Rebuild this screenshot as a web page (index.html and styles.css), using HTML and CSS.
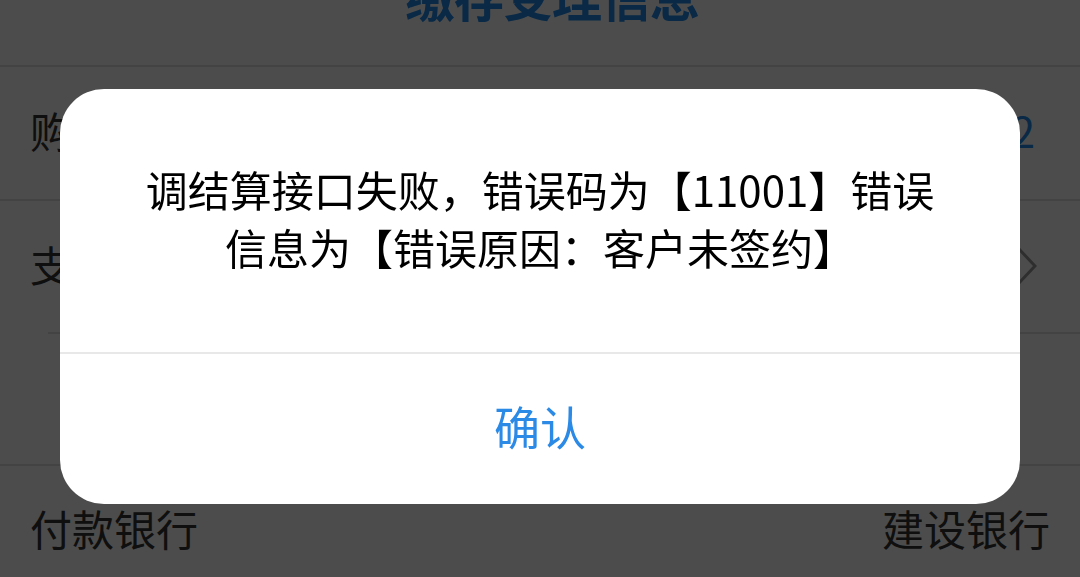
FILE: index.html
```html
<!DOCTYPE html>
<html lang="zh-CN">
<head>
<meta charset="utf-8">
<title>缴存受理信息</title>
<link rel="stylesheet" href="styles.css">
</head>
<body>
<div class="page">
  <header class="header">
    <h1 class="title">缴存受理信息</h1>
  </header>
  <div class="divider"></div>
  <div class="row row-1">
    <span class="label">购房合同号</span>
    <span class="value">2</span>
  </div>
  <div class="divider"></div>
  <div class="row row-2">
    <span class="label">支付方式</span>
    <svg class="chevron" width="20" height="38" viewBox="0 0 20 38" aria-hidden="true">
      <polyline points="2,2 18,19 2,36" fill="none" stroke="#9c9c9c" stroke-width="3"/>
    </svg>
  </div>
  <div class="divider inset"></div>
  <div class="row row-3"></div>
  <div class="divider"></div>
  <div class="row row-4">
    <span class="label">付款银行</span>
    <span class="value plain">建设银行</span>
  </div>
</div>

<div class="overlay">
  <div class="dialog">
    <p class="message">调结算接口失败，错误码为【11001】错误信息为【错误原因：客户未签约】</p>
    <div class="dialog-divider"></div>
    <button class="confirm" type="button">确认</button>
  </div>
</div>
</body>
</html>
```

FILE: styles.css
```css
* { box-sizing: border-box; }

html, body {
  margin: 0;
  padding: 0;
  height: 100%;
  overflow: hidden;
  background: #ffffff;
  font-family: "Noto Sans CJK SC", "Noto Sans", sans-serif;
}

.page {
  width: 1080px;
  background: #ffffff;
}

.header {
  height: 65px;
  display: flex;
  justify-content: center;
  align-items: flex-start;
  overflow: hidden;
}

.title {
  margin: -30px 0 0 24px;
  font-size: 50px;
  line-height: 50px;
  font-weight: 700;
  color: #1f8bea;
  letter-spacing: -1px;
}

.divider {
  height: 2px;
  background: #e0e0e0;
}

.divider.inset {
  margin-left: 48px;
}

.row {
  display: flex;
  align-items: center;
  justify-content: space-between;
  padding: 0 30px 7px;
  font-size: 42px;
  color: #333333;
}

.row-1 { height: 132px; }
.row-2 { height: 131px; }
.row-3 { height: 130px; }
.row-4 { height: 132px; padding-bottom: 10px; }

.row-1 .value {
  color: #1f8bea;
  margin-right: 15px;
}

.row .value.plain {
  color: #333333;
}

.chevron {
  display: block;
  margin-right: 13px;
  margin-top: 6px;
}

.overlay {
  position: fixed;
  inset: 0;
  background: rgba(0, 0, 0, 0.7);
  display: flex;
  justify-content: center;
  align-items: flex-start;
  padding-top: 89px;
}

.dialog {
  width: 960px;
  background: #ffffff;
  border-radius: 44px;
  overflow: hidden;
  display: flex;
  flex-direction: column;
}

.message {
  margin: 0;
  padding: 71px 72px 76px;
  font-size: 42px;
  line-height: 58px;
  color: #000000;
  text-align: center;
}

.dialog-divider {
  height: 2px;
  background: #e8e8e8;
}

.confirm {
  height: 150px;
  border: 0;
  background: transparent;
  font-family: inherit;
  font-size: 46px;
  color: #2a8ae6;
  padding: 0 0 8px;
  cursor: pointer;
}
```
